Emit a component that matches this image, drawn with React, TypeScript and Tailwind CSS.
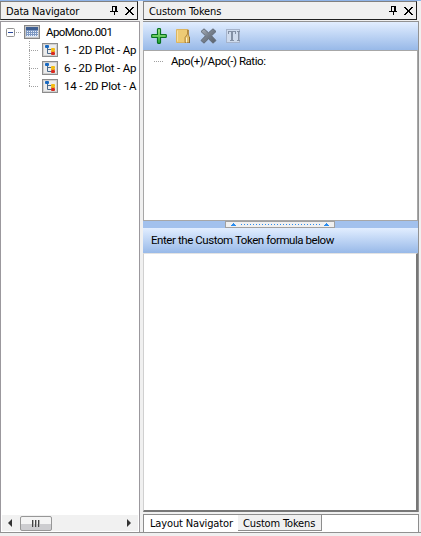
import type { ReactNode } from "react";
import { clsx } from "clsx";

const PinIcon = () => (
  <svg width="8" height="9" viewBox="0 0 8 9" shapeRendering="crispEdges" className="shrink-0">
    <path d="M2 0h5v5h1v1H5v3H4V6H0V5h2zM3 1v4h2V1z" fill="#000" fillRule="evenodd" />
  </svg>
);

const CloseIcon = () => (
  <svg width="9" height="8" viewBox="0 0 9 8" shapeRendering="crispEdges" className="shrink-0">
    <path
      d="M0 0h2v1h1v1h1v1h1V2h1V1h1V0h2v1H8v1H7v1H6v2h1v1h1v1h1v1H7V7H6V6H5V5H4v1H3v1H2v1H0V7h1V6h1V5h1V3H2V2H1V1H0z"
      fill="#000"
    />
  </svg>
);

const PanelHeader = ({ title, className }: { title: string; className?: string }) => {
  return (
    <div
      className={clsx(
        "flex h-[19px] shrink-0 items-center border border-[#808080] border-r-[#202020] border-b-[#202020] bg-[#f0f0f0] pl-[5px] font-['DejaVu_Sans_Condensed','Noto_Sans',sans-serif] text-[11px] text-black",
        className
      )}
    >
      <span className="flex-1 pt-[3px] tracking-[-0.15px]">{title}</span>
      <PinIcon />
      <span className="w-[7px]" />
      <CloseIcon />
      <span className="w-[3px]" />
    </div>
  );
};

const TableIcon = () => (
  <svg width="16" height="14" viewBox="0 0 16 14" className="shrink-0">
    <rect x=".5" y=".5" width="15" height="13" fill="#c8c8c8" stroke="#858585" />
    <rect x="2" y="2" width="12" height="10" fill="#dfe8f4" />
    <rect x="2" y="2" width="12" height="3" fill="#3f5f92" />
    <rect x="2" y="5" width="12" height="6" fill="#7d98c2" />
    <path d="M3 6.5h11M3 8.5h11M3 10.5h11" stroke="#e8f0fb" strokeDasharray="1 1" />
  </svg>
);

const PlotIcon = () => (
  <svg width="16" height="14" viewBox="0 0 16 14" className="shrink-0">
    <rect x=".5" y=".5" width="15" height="13" fill="#ececec" stroke="#8c8c8c" />
    <rect x="1.5" y="1.5" width="13" height="11" fill="none" stroke="#d0d0d0" />
    <path d="M5.5 4v6.5H9M5.5 6.5H9" fill="none" stroke="#4a6a8c" />
    <rect x="3" y="2" width="4" height="3" rx="1" fill="#1769c2" />
    <rect x="9" y="5" width="4" height="3" rx="1" fill="#f2bd13" />
    <rect x="9" y="9" width="4" height="3" rx="1" fill="#d82b20" />
    <path d="M9 8.5h4" stroke="#efa421" />
  </svg>
);

const Expander = () => (
  <svg width="9" height="9" viewBox="0 0 9 9" className="shrink-0">
    <rect x=".5" y=".5" width="8" height="8" rx="1" fill="#fff" stroke="#919191" />
    <path d="M2 4.5h5" stroke="#28479d" />
  </svg>
);

const Dots = ({ width }: { width: 5 | 9 }) => (
  <svg width={width} height="1" shapeRendering="crispEdges" className="shrink-0">
    <path d={`M0 .5h${width}`} stroke="#a0a0a0" strokeDasharray="1 1" />
  </svg>
);

const plots = [
  { label: "1 - 2D Plot - Ap", last: false },
  { label: "6 - 2D Plot - Ap", last: false },
  { label: "14 - 2D Plot - A", last: true },
];

const Tree = () => {
  return (
    <div className="flex-1 overflow-hidden pt-px font-['Roboto',Arial,sans-serif] text-[11.5px] text-black">
      <div className="flex h-[18px] items-center pl-[5px]">
        <Expander />
        <span className="w-px" />
        <Dots width={5} />
        <span className="w-[3px]" />
        <TableIcon />
        <span className="ml-[6px] pt-[2px] whitespace-nowrap tracking-[-0.55px]">ApoMono.001</span>
      </div>
      {plots.map((plot) => (
        <div key={plot.label} className="flex h-[18px] items-center pl-[28px]">
          <svg width="9" height="18" viewBox="0 0 9 18" shapeRendering="crispEdges" className="shrink-0">
            <path
              d={plot.last ? "M.5 0v9M0 9.5h9" : "M.5 0v18M0 9.5h9"}
              fill="none"
              stroke="#a0a0a0"
              strokeDasharray="1 1"
            />
          </svg>
          <span className="w-[4px]" />
          <PlotIcon />
          <span className="ml-[6px] pt-[2px] whitespace-pre tracking-[-0.2px]">{plot.label}</span>
        </div>
      ))}
    </div>
  );
};

const ScrollBar = () => {
  return (
    <div className="ml-px mr-px flex h-4 shrink-0 items-center bg-[#f1f1f1]">
      <svg width="18" height="16" viewBox="0 0 18 16">
        <path d="M10 4v8L6 8z" fill="#333" />
      </svg>
      <div className="flex h-[15px] w-8 items-center justify-center gap-px rounded-[2px] border border-[#979797] bg-linear-to-b from-[#f4f4f4] from-50% to-[#cdcdd0] to-55%">
        {[0, 1, 2].map((i) => (
          <span key={i} className="h-[7px] w-[2px] border-l border-[#444] bg-[#b0b0b0]" />
        ))}
      </div>
      <span className="flex-1" />
      <svg width="14" height="16" viewBox="0 0 14 16">
        <path d="M3 4v8l4-4z" fill="#333" />
      </svg>
    </div>
  );
};

const AddIcon = () => (
  <svg width="16" height="16" viewBox="0 0 16 16">
    <defs>
      <linearGradient id="add" x2="0" y2="1">
        <stop stopColor="#b2ed8e" />
        <stop offset="1" stopColor="#23a831" />
      </linearGradient>
    </defs>
    <path
      d="M7.2.7h1.6q.7 0 .7.7v5.1h5.1q.7 0 .7.7v1.6q0 .7-.7.7H9.5v5.1q0 .7-.7.7H7.2q-.7 0-.7-.7V9.5H1.4q-.7 0-.7-.7V7.2q0-.7.7-.7h5.1V1.4q0-.7.7-.7z"
      fill="url(#add)"
      stroke="#087222"
      strokeWidth="1.2"
    />
  </svg>
);

const FolderIcon = () => (
  <svg width="15" height="16" viewBox="0 0 15 16">
    <path d="M.5 1.5h11v13H.5z" fill="#edca75" stroke="#dcb560" />
    <path d="M1.5 2.5v11" stroke="#f8dfa0" />
    <path d="M9 14.5V9.5l2.5-3.5V2l1 0V7l1 2.5v5z" fill="#e2bd68" stroke="#a87c35" strokeWidth=".8" />
    <path d="M10.5 9.5v5" stroke="#fff3c8" />
    <path d="M13.5 9v6" stroke="#8a6a35" />
  </svg>
);

const DeleteIcon = () => (
  <svg width="17" height="16" viewBox="0 0 17 16">
    <defs>
      <linearGradient id="del" x2="1" y2="1">
        <stop stopColor="#aeb4bd" />
        <stop offset=".5" stopColor="#747d89" />
        <stop offset="1" stopColor="#59616c" />
      </linearGradient>
    </defs>
    <path
      d="M4 .8l4.5 4L13 .8 16 3.5l-4.5 4.3 4.5 4.7-3 2.7-4.5-4.4L4 15.2 1 12.5l4.5-4.7L1 3.5z"
      fill="url(#del)"
      stroke="#616a77"
      strokeLinejoin="round"
    />
  </svg>
);

const TextIcon = () => (
  <svg width="15" height="14" viewBox="0 0 15 14" shapeRendering="crispEdges">
    <rect x=".5" y=".5" width="13" height="13" fill="#cfdbed" stroke="#a5b3cb" />
    <path d="M2 2h8v3H9V3H7v8h1v1H4v-1h1V3H3v2H2zM11 2h3v1h-1v8h1v1h-3v-1h1V3h-1z" fill="#8390a4" />
  </svg>
);

const Tool = ({ children }: { children: ReactNode }) => (
  <div className="flex h-full w-[25px] items-center justify-center">{children}</div>
);

const SplitArrow = () => (
  <svg width="5" height="3" viewBox="0 0 5 3" shapeRendering="crispEdges">
    <path d="M2 0h1v1h1v1h1v1H0V2h1V1h1z" fill="#298cef" />
  </svg>
);

export default function App() {
  return (
    <div className="flex h-[536px] w-[421px] flex-col overflow-hidden bg-[#f0f0f0]">
      <div className="h-px shrink-0 bg-[#8fb4e8]" />
      <div className="flex h-[532px] shrink-0 border-b border-[#919191]">
        <div className="flex w-[140px] flex-col">
          <PanelHeader title="Data Navigator" className="mr-[2px]" />
          <div className="mt-px flex flex-1 flex-col overflow-hidden border border-b-0 border-[#9b989d] bg-white">
            <Tree />
            <ScrollBar />
            <div className="h-px" />
          </div>
        </div>

        <div className="ml-[3px] flex w-[276px] flex-col">
          <PanelHeader title="Custom Tokens" className="mr-[2px]" />
          <div className="mt-px flex h-[491px] shrink-0 flex-col border-t border-r border-[#929292]">
            <div className="flex h-[28px] shrink-0 items-center bg-linear-to-b from-[#e2eeff] to-[#98b9e8] pb-px pl-[3px]">
              <Tool><AddIcon /></Tool>
              <Tool><FolderIcon /></Tool>
              <Tool><DeleteIcon /></Tool>
              <Tool><TextIcon /></Tool>
            </div>
            <div className="flex h-[171px] shrink-0 items-start border border-[#a7a7a7] bg-white pt-px font-['Roboto',Arial,sans-serif] text-[11.5px] text-black">
              <div className="flex h-[18px] items-center pl-[10px]">
                <Dots width={9} />
                <span className="ml-[8px] pt-[2px] whitespace-nowrap tracking-[-0.45px]">Apo(+)/Apo(-) Ratio:</span>
              </div>
            </div>
            <div className="flex h-[7px] shrink-0 bg-[#a2c1ed] pl-[82px]">
              <div className="flex w-[110px] items-center justify-between border border-[#a0a0a0] bg-[#f0f0f0] px-[5px]">
                <SplitArrow />
                <svg width="79" height="1" shapeRendering="crispEdges">
                  <path d="M0 .5h79" stroke="#298cef" strokeDasharray="1 2" />
                </svg>
                <SplitArrow />
              </div>
            </div>
            <div className="flex h-[25px] shrink-0 items-center bg-linear-to-b from-[#e2eeff] to-[#98b9e8] pt-px pl-2 font-['Roboto',Arial,sans-serif] text-[11.5px] text-black">
              <span className="whitespace-nowrap tracking-[-0.43px]">Enter the Custom Token formula below</span>
            </div>
            <div className="flex-1 border border-t-[#e3e3e3] border-r-2 border-b-2 border-l-[#d0d0d0] border-r-[#777] border-b-[#777] bg-white" />
          </div>
          <div className="mt-[2px] flex h-[18px] shrink-0 items-start border-t border-r border-l border-[#8d8d8d] bg-white font-['DejaVu_Sans_Condensed','Noto_Sans',sans-serif] text-[11px] tracking-[-0.15px] text-black">
            <div className="flex h-[17px] w-[94px] items-center pt-px pl-[6px] whitespace-nowrap">Layout Navigator</div>
            <div className="flex h-[16px] w-[84px] items-center border-r border-b border-[#8d8d8d] bg-[#f0f0f0] pt-[3px] pl-[5px] whitespace-nowrap">
              Custom Tokens
            </div>
          </div>
        </div>
      </div>
    </div>
  );
}
